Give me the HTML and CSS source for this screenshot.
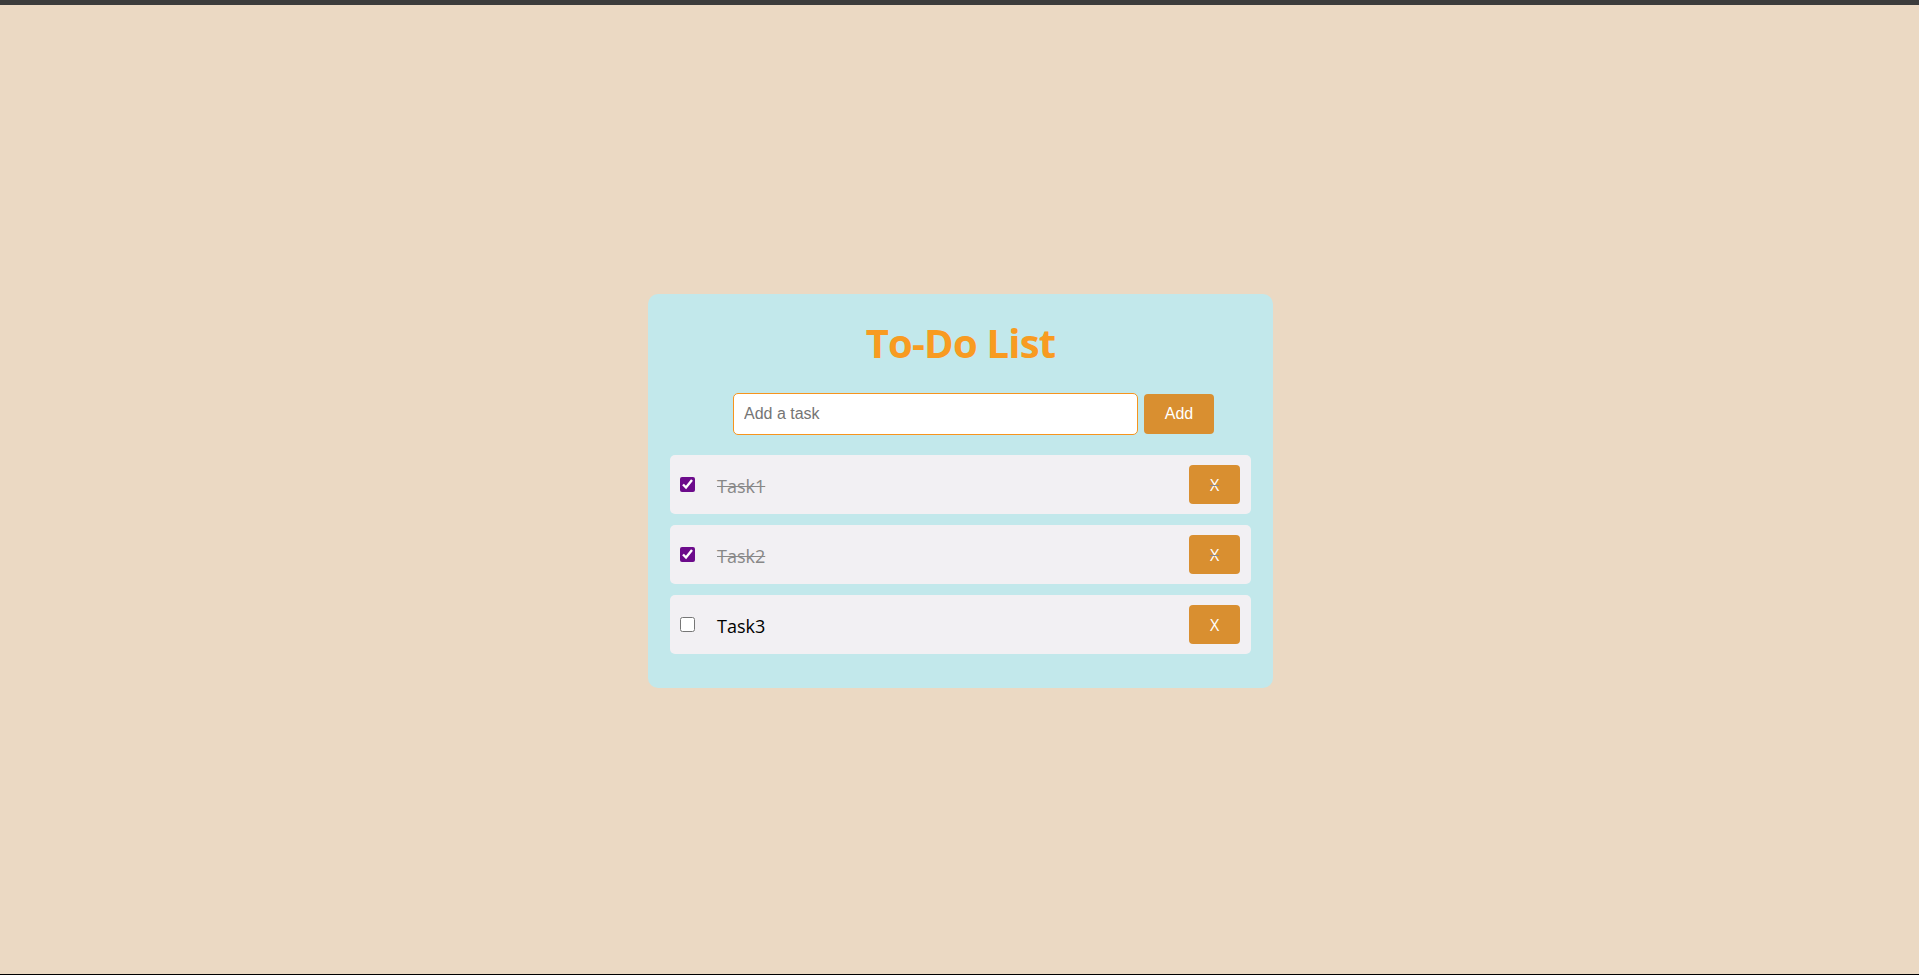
FILE: index.html
```html
<!DOCTYPE html>
<html lang="en">
<head>
<meta charset="utf-8">
<title>To-Do List</title>
<link rel="stylesheet" href="styles.css">
</head>
<body>
<div class="topbar"></div>
<main class="stage">
  <section class="card">
    <h1 class="title">To-Do List</h1>
    <div class="add-row">
      <input class="task-input" type="text" placeholder="Add a task">
      <button class="add-btn">Add</button>
    </div>
    <ul class="task-list">
      <li class="task done">
        <input class="check" type="checkbox" checked>
        <span class="label">Task1</span>
        <button class="del-btn">X</button>
      </li>
      <li class="task done">
        <input class="check" type="checkbox" checked>
        <span class="label">Task2</span>
        <button class="del-btn">X</button>
      </li>
      <li class="task">
        <input class="check" type="checkbox">
        <span class="label">Task3</span>
        <button class="del-btn">X</button>
      </li>
    </ul>
  </section>
</main>
</body>
</html>
```
FILE: styles.css
```css
* { box-sizing: border-box; }
html, body { margin: 0; padding: 0; }
body {
  background: #ebd9c3;
  font-family: "Open Sans", "Noto Sans", sans-serif;
  height: 975px;
  overflow: hidden;
}
.topbar {
  height: 5px;
  background: #3c3c3c;
}
.stage {
  height: 970px;
  border-bottom: 1px solid #000;
  display: flex;
  justify-content: center;
  align-items: flex-start;
  padding-top: 289px;
  padding-left: 2px;
}
.card {
  width: 625px;
  background: #c2e8eb;
  border-radius: 10px;
  padding: 21px 22px 23px 22px;
}
.title {
  margin: 0 0 23px 0;
  text-align: center;
  color: #f89b21;
  font-size: 40px;
  font-weight: 700;
  letter-spacing: -0.8px;
  line-height: normal;
}
.add-row {
  display: flex;
  align-items: center;
  gap: 6px;
  padding-left: 63px;
  margin-bottom: 20px;
}
.task-input {
  width: 405px;
  height: 42px;
  border: 1px solid #f7941d;
  border-radius: 5px;
  padding: 0 10px;
  font-family: "Liberation Sans", Arial, sans-serif;
  font-size: 16px;
  background: #fff;
  outline: none;
}
.task-input::placeholder { color: #757575; }
.add-btn {
  width: 70px;
  height: 40px;
  border: none;
  border-radius: 4px;
  background: #d98f30;
  color: #fff;
  font-family: "Liberation Sans", Arial, sans-serif;
  font-size: 16px;
  padding: 0;
}
.task-list {
  list-style: none;
  margin: 0;
  padding: 0;
}
.task {
  display: flex;
  align-items: center;
  background: #f2f0f3;
  border-radius: 5px;
  padding: 10px 11px 10px 10px;
  margin-bottom: 11px;
  color: #000;
  font-size: 18px;
}
.task.done {
  color: #888;
  text-decoration: line-through;
}
.check {
  width: 15px;
  height: 15px;
  margin: 0;
  accent-color: #6c0b8b;
}
.label {
  flex: 1;
  margin-left: 22px;
  padding-top: 2px;
}
.del-btn {
  width: 51px;
  height: 39px;
  border: none;
  border-radius: 4px;
  background: #d98f30;
  color: #fff;
  font-family: "Open Sans", "Noto Sans", sans-serif;
  font-size: 16px;
  padding: 0;
}
```
